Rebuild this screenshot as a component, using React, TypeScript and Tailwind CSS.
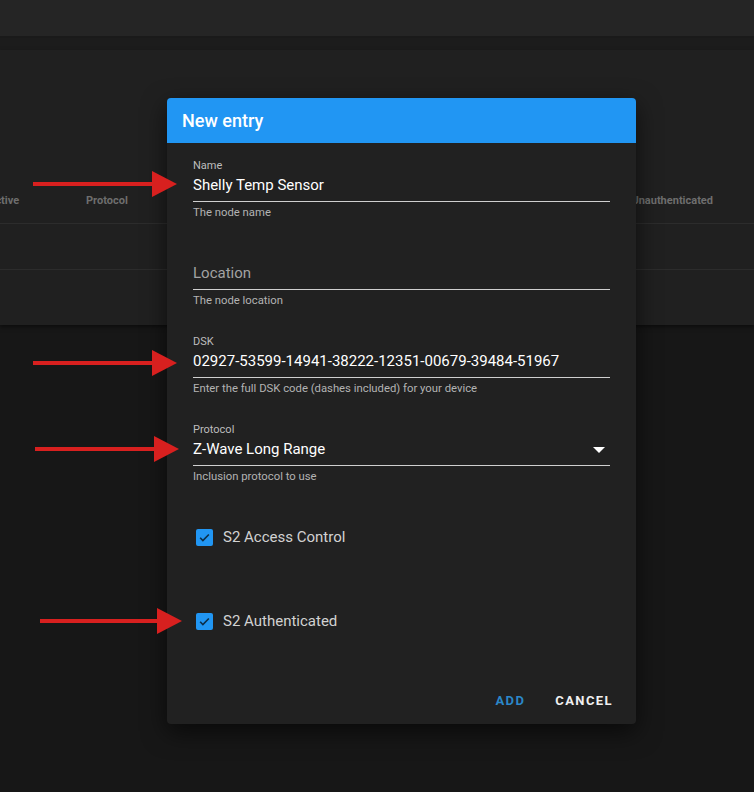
import { ReactNode } from 'react';

const font = { fontFamily: 'Roboto, "Noto Sans", sans-serif' };

function Arrow({ x1, x2, y }: { x1: number; x2: number; y: number }) {
  const w = x2 - x1;
  return (
    <svg
      className="absolute"
      style={{ left: x1, top: y - 13 }}
      width={w}
      height={26}
      viewBox={`0 0 ${w} 26`}
    >
      <rect x={0} y={11} width={w - 22} height={4} fill="#d8201f" />
      <polygon points={`${w - 25},0 ${w},13 ${w - 25},26`} fill="#d8201f" />
    </svg>
  );
}

function Field({
  label,
  value,
  helper,
  placeholder,
  select,
}: {
  label?: string;
  value: string;
  helper: string;
  placeholder?: boolean;
  select?: boolean;
}) {
  return (
    <div className="h-[88px] flex flex-col">
      <div className="h-[13px] text-[11px] leading-[13px] text-[#bdbdbd]">{label}</div>
      <div className="mt-[3px] h-[20px] flex items-center justify-between">
        <span
          className={
            placeholder
              ? 'text-[15px] leading-[20px] text-[#a3a3a3]'
              : 'text-[15px] leading-[20px] text-white'
          }
        >
          {value}
        </span>
        {select && (
          <svg width="12" height="6" viewBox="0 0 12 6" className="mr-[5px] mt-[2px]">
            <polygon points="0,0 12,0 6,6" fill="#ffffff" />
          </svg>
        )}
      </div>
      <div className="mt-[6px] h-px bg-[#cfcfcf]" />
      <div className="mt-[4px] text-[11.3px] leading-[14px] text-[#b3b3b3]">{helper}</div>
    </div>
  );
}

function Check({ children }: { children: ReactNode }) {
  return (
    <div className="h-[52px] flex items-center">
      <div className="ml-[3px] w-[17px] h-[17px] rounded-[2px] bg-[#2196f3] flex items-center justify-center">
        <svg width="13" height="13" viewBox="0 0 24 24">
          <path d="M4 12.5l5 5L20 6.5" fill="none" stroke="#0c2e48" strokeWidth="3" />
        </svg>
      </div>
      <span className="ml-[10px] text-[15px] text-[#d2d2d2]">{children}</span>
    </div>
  );
}

export default function App() {
  return (
    <div className="relative w-[754px] h-[792px] overflow-hidden bg-[#171717]" style={font}>
      <div className="h-[36px] bg-[#252525]" />
      <div className="h-[2px] bg-[#1a1a1a]" />
      <div className="h-[12px] bg-[#1c1c1c]" />
      <div className="h-[275px] bg-[#202020] flex flex-col shadow-[0_2px_4px_rgba(0,0,0,0.5)]">
        <div className="mt-[130px] h-[44px] flex items-center text-[11px] font-bold text-[#6e6e6e] border-b border-[#2c2c2c]">
          <span className="ml-[-12px] w-[98px]">Active</span>
          <span>Protocol</span>
          <span className="ml-auto mr-[41px]">Unauthenticated</span>
        </div>
        <div className="h-[46px] border-b border-[#2c2c2c]" />
      </div>

      <div className="absolute left-[167px] top-[98px] w-[469px] h-[626px] rounded-[4px] bg-[#212121] shadow-[0_8px_24px_rgba(0,0,0,0.6)] overflow-hidden flex flex-col">
        <div className="h-[45px] bg-[#2196f3] flex items-center pl-[15px]">
          <span className="text-[18px] font-medium text-white">New entry</span>
        </div>
        <div className="px-[26px] pt-[16px] flex flex-col">
          <Field label="Name" value="Shelly Temp Sensor" helper="The node name" />
          <Field value="Location" placeholder helper="The node location" />
          <Field
            label="DSK"
            value="02927-53599-14941-38222-12351-00679-39484-51967"
            helper="Enter the full DSK code (dashes included) for your device"
          />
          <Field
            label="Protocol"
            value="Z-Wave Long Range"
            helper="Inclusion protocol to use"
            select
          />
          <Check>S2 Access Control</Check>
          <div className="h-[32px]" />
          <Check>S2 Authenticated</Check>
        </div>
        <div className="mt-[36px] h-[36px] flex items-center justify-end gap-[30px] pr-[23px] text-[13px] font-bold tracking-[1.4px]">
          <span className="text-[#2b87c9]">ADD</span>
          <span className="text-[#f0f0f0]">CANCEL</span>
        </div>
      </div>

      <Arrow x1={33} x2={177} y={184} />
      <Arrow x1={33} x2={177} y={363} />
      <Arrow x1={35} x2={179} y={449} />
      <Arrow x1={40} x2={182} y={621} />
    </div>
  );
}
